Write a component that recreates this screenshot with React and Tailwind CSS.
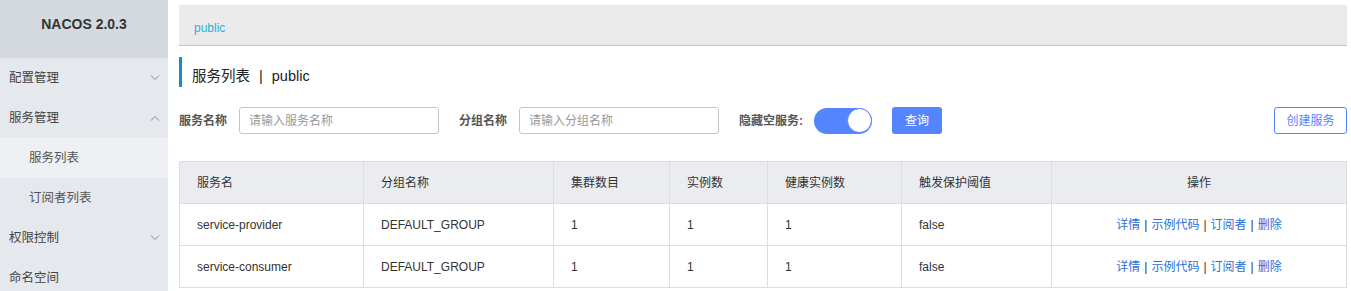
import React from 'react';

const menu = [
  { label: '配置管理', arrow: 'down' },
  { label: '服务管理', arrow: 'up' },
  { label: '服务列表', sub: true, active: true },
  { label: '订阅者列表', sub: true },
  { label: '权限控制', arrow: 'down' },
  { label: '命名空间' },
];

const columns = [
  { title: '服务名', width: 'w-[184px]' },
  { title: '分组名称', width: 'w-[190px]' },
  { title: '集群数目', width: 'w-[116px]' },
  { title: '实例数', width: 'w-[98px]' },
  { title: '健康实例数', width: 'w-[134px]' },
  { title: '触发保护阈值', width: 'w-[150px]' },
  { title: '操作', width: '', center: true },
];

const rows = [
  ['service-provider', 'DEFAULT_GROUP', '1', '1', '1', 'false'],
  ['service-consumer', 'DEFAULT_GROUP', '1', '1', '1', 'false'],
];

const Chevron = ({ dir }) => (
  <svg width="10" height="6" viewBox="0 0 10 6" fill="none" stroke="#888" strokeWidth="1">
    {dir === 'up' ? <path d="M1 5.5 L5 1.5 L9 5.5" /> : <path d="M1 0.5 L5 4.5 L9 0.5" />}
  </svg>
);

const Sidebar = () => (
  <div className="w-[168px] shrink-0 bg-[#e5e8ed] h-[291px]">
    <div className="h-[58px] bg-[#d4d9e0] flex justify-center pt-[14px] text-[14px] font-bold text-[#333]">
      NACOS 2.0.3
    </div>
    {menu.map((item) => (
      <div
        key={item.label}
        className={`h-[40px] flex items-center justify-between pr-[8px] text-[12.5px] ${
          item.sub ? 'pl-[29px] text-[#555]' : 'pl-[9px] text-[#444]'
        } ${item.active ? 'bg-[#eef0f4]' : ''}`}
      >
        <span>{item.label}</span>
        {item.arrow && <Chevron dir={item.arrow} />}
      </div>
    ))}
  </div>
);

const Sep = () => <span className="text-[#333] mx-[4px]">|</span>;

const App = () => {
  return (
    <div
      className="flex w-[1351px] h-[291px] overflow-hidden bg-white"
      style={{ fontFamily: '"Liberation Sans", "Noto Sans CJK SC", sans-serif' }}
    >
      <Sidebar />
      <div className="flex-1 pl-[11px] pr-[4px] pt-[5px]">
        <div className="h-[41px] bg-[#ebebeb] border-b border-[#c6c6c6] flex items-center pt-[6px] pl-[15px] text-[12px] text-[#27b4d6]">
          public
        </div>

        <div className="mt-[11px] h-[30px] border-l-[3px] border-[#1a8bc4] flex items-center pt-[9px] pl-[10px] text-[14.5px] text-[#222]">
          服务列表 <span className="mx-[9px]">|</span> public
        </div>

        <div className="mt-[20px] flex items-center h-[27px]">
          <span className="text-[12px] font-bold text-[#555] w-[60px]">服务名称</span>
          <input
            className="w-[200px] h-[27px] border border-[#c4c6cf] rounded-[3px] px-[9px] text-[12px] outline-none placeholder:text-[#999]"
            placeholder="请输入服务名称"
          />
          <span className="ml-[20px] text-[12px] font-bold text-[#555] w-[60px]">分组名称</span>
          <input
            className="w-[200px] h-[27px] border border-[#c4c6cf] rounded-[3px] px-[9px] text-[12px] outline-none placeholder:text-[#999]"
            placeholder="请输入分组名称"
          />
          <span className="ml-[20px] text-[12px] font-bold text-[#555]">隐藏空服务:</span>
          <div className="ml-[11px] w-[58px] h-[26px] rounded-full bg-[#5584ff] flex items-center justify-end">
            <div className="w-[25px] h-[25px] rounded-full bg-white border border-[#5584ff]" />
          </div>
          <button className="ml-[20px] w-[50px] h-[27px] rounded-[3px] bg-[#5584ff] text-white text-[12px]">
            查询
          </button>
          <div className="flex-1" />
          <button className="w-[73px] h-[27px] rounded-[3px] border border-[#5584ff] text-[#5584ff] text-[12px] bg-white">
            创建服务
          </button>
        </div>

        <table className="mt-[27px] w-[1168px] border-collapse text-[12px] text-[#333] table-fixed">
          <thead>
            <tr className="h-[42px] bg-[#ebecf0]">
              {columns.map((c) => (
                <th
                  key={c.title}
                  className={`${c.width} border border-[#dcdee3] font-normal px-[17px] ${
                    c.center ? 'text-center' : 'text-left'
                  }`}
                >
                  {c.title}
                </th>
              ))}
            </tr>
          </thead>
          <tbody>
            {rows.map((r) => (
              <tr key={r[0]} className="h-[42px]">
                {r.map((v, i) => (
                  <td key={i} className="border border-[#dcdee3] px-[17px]">
                    {v}
                  </td>
                ))}
                <td className="border border-[#dcdee3] text-center text-[#2a6fd6]">
                  详情<Sep />示例代码<Sep />订阅者<Sep />删除
                </td>
              </tr>
            ))}
          </tbody>
        </table>
      </div>
    </div>
  );
};

export default App;
